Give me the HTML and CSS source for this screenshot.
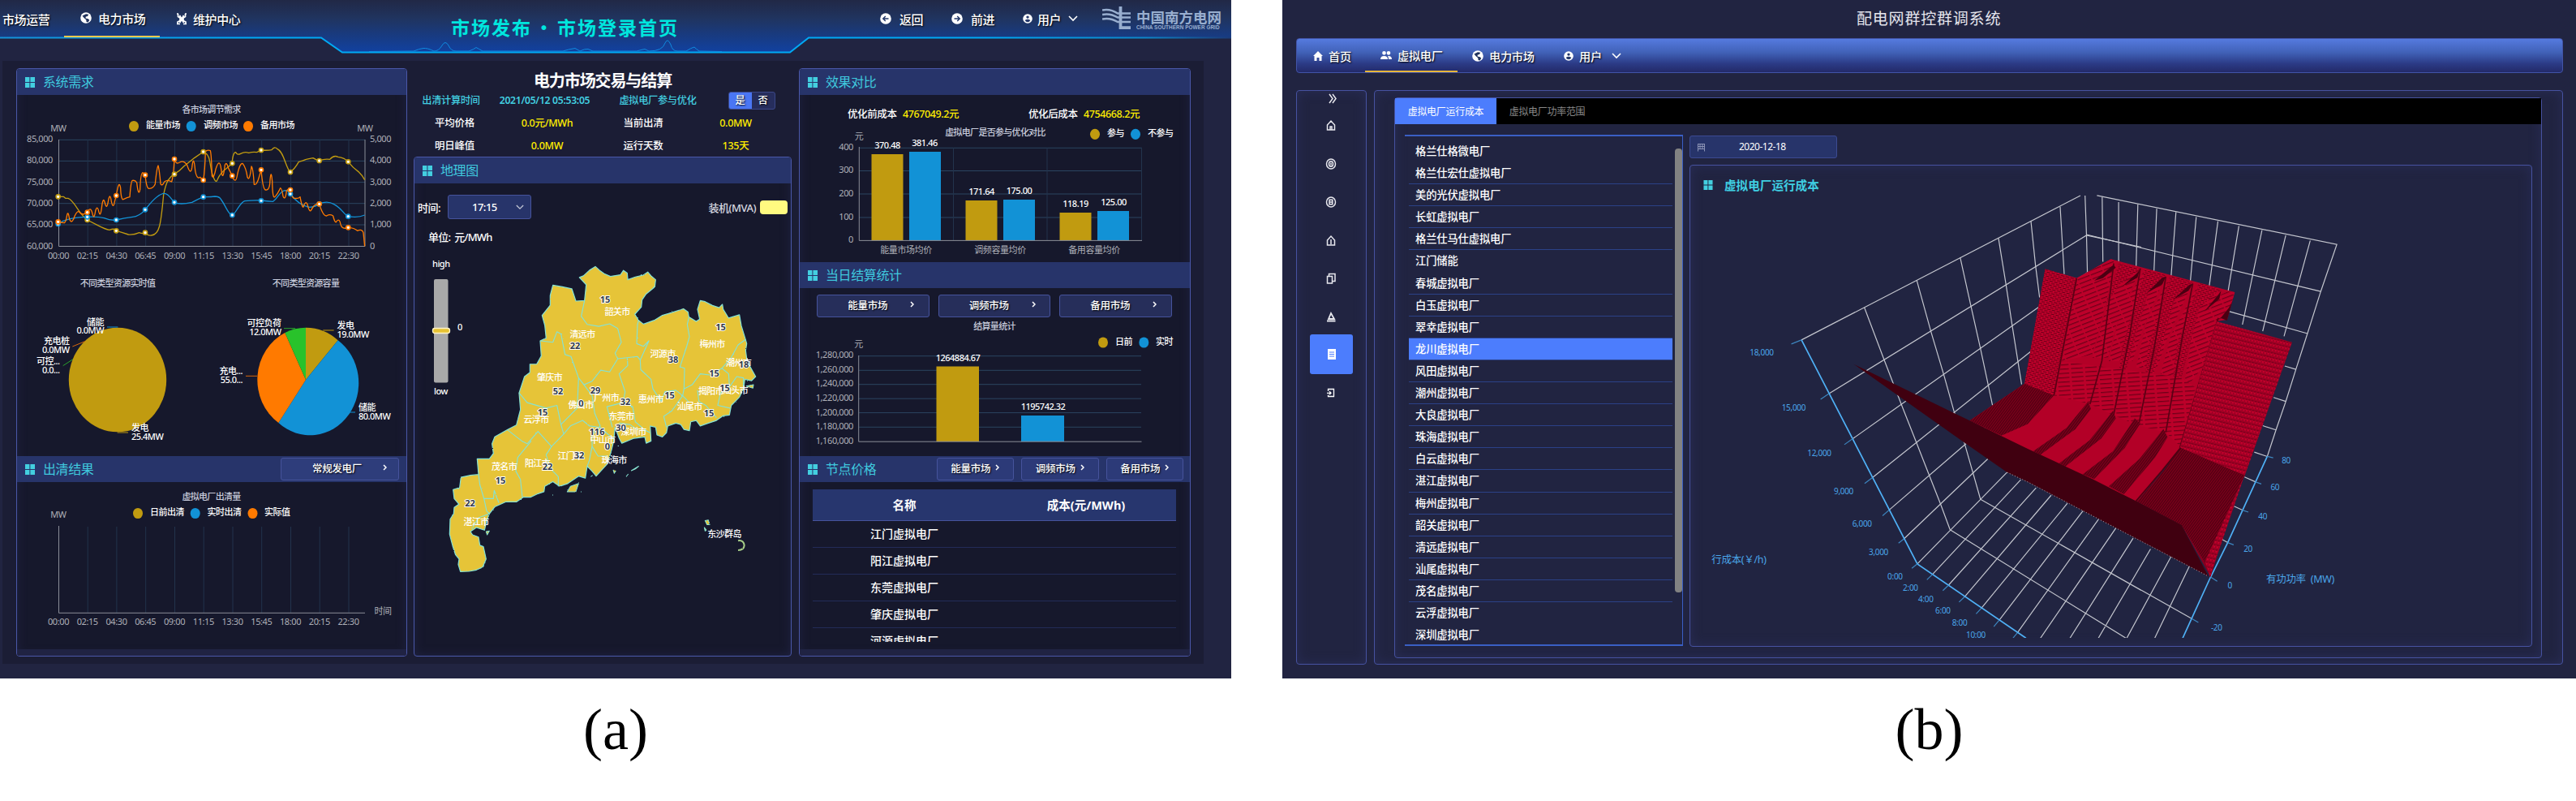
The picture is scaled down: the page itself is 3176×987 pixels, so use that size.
FILE: index.html
```html
<!DOCTYPE html>
<html lang="zh-CN">
<head>
<meta charset="utf-8">
<title>市场发布 · 配电网群控群调系统</title>
<link rel="stylesheet" href="styles.css">
</head>
<body>
<svg class="defs" width="0" height="0">
  <defs>
    <symbol id="grid" viewBox="0 0 12 13"><path fill="#43cfe0" d="M0 0h5.4v6H0zM6.4 0H12v6H6.4zM0 7h5.4v6H0zM6.4 7H12v6H6.4z"/></symbol>
    <symbol id="globe" viewBox="0 0 14 14"><circle cx="7" cy="7" r="6.8" fill="#fff"/><path fill="#20325c" d="M7 2.2l3.2.6L9 5 6.800 5.600 6.500 7.500l3.200.8 1.600 1.500-1.800 2.600-2-.4-.2-2.400-2.800-2.600L2.500 4.500z"/></symbol>
    <symbol id="user" viewBox="0 0 14 14"><circle cx="7" cy="7" r="6.800" fill="#fff"/><circle cx="7" cy="4.800" r="2" fill="#24386a"/><path fill="#24386a" d="M3 9.200q4-2.400 8 0-1.500 2.800-4 2.800T3 9.200z"/></symbol>
    <symbol id="chev" viewBox="0 0 12 8"><path d="M1 1l5 5 5-5" fill="none" stroke="#fff" stroke-width="1.600"/></symbol>
    <symbol id="chevr" viewBox="0 0 5 8"><path d="M1 1l3 3-3 3" fill="none" stroke="#fff" stroke-width="1.500"/></symbol>
  </defs>
</svg>

<figure class="fig fig-a">
<div class="screen market">
  <header class="top">
    <svg class="top-bg" width="1518" height="75" viewBox="0 0 1518 75">
      <defs>
        <linearGradient id="tg" x1="0" y1="0" x2="0" y2="64" gradientUnits="userSpaceOnUse"><stop offset="0" stop-color="#212846"/><stop offset=".35" stop-color="#20345f"/><stop offset="1" stop-color="#1141a0"/></linearGradient>
        <linearGradient id="tl" x1="0" y1="0" x2="1518" y2="0" gradientUnits="userSpaceOnUse"><stop offset="0" stop-color="#1592d8"/><stop offset=".2" stop-color="#00aaf5"/><stop offset=".8" stop-color="#00aaf5"/><stop offset=".93" stop-color="#0e86c8"/><stop offset="1" stop-color="#1b3a78"/></linearGradient>
      </defs>
      <path fill="url(#tg)" d="M0 0H1518V46H997L974 64.500H422L396 46H0z"/>
      <path fill="none" stroke="url(#tl)" stroke-width="2" d="M0 46.500H396L422 64.500H974L997 46.500H1518"/>
      <path fill="none" stroke="#0f8be0" d="M455 63.500L510 63Q517 60 522 59.500T535 63Q541 63 545 56T553 56Q556 63 562 63H578Q584 61 587 58.500Q590 60 595 63H694Q700 61 709 59.500L715 63Q721 60 725 60.500L731 63H785Q792 61 795 60.500L800 63Q817 63 820 53Q823 46 827 55Q829 63 835 63H846Q852 59 856 58Q858 60 862 63L890 63.500"/>
    </svg>
    <nav class="nav-l">
      <a>市场运营</a>
      <a class="on"><svg width="14" height="14"><use href="#globe"/></svg>电力市场</a>
      <a class="mt"><svg width="14" height="15" viewBox="0 0 14 15"><path d="M2.500 1v3.500L5 6v3.500L2 11v3M11.500 1v3.500L9 6v3.500l3 1.500v3M5 6h4M5 9.500h4M1 1h2M11 1h2M1 13.500h4M9 13.500h4M4.500 3l5 9M9.500 3l-5 9" fill="none" stroke="#fff" stroke-width="1.700"/></svg>维护中心</a>
    </nav>
    <h1>市场发布<i>·</i>市场登录首页</h1>
    <nav class="nav-r">
      <a><svg width="14" height="14" viewBox="0 0 14 14"><circle cx="7" cy="7" r="6.800" fill="#fff"/><path d="M10.500 7H4M6.800 4L3.800 7l3 3" fill="none" stroke="#24386a" stroke-width="1.500"/></svg>返回</a>
      <a><svg width="14" height="14" viewBox="0 0 14 14"><circle cx="7" cy="7" r="6.800" fill="#fff"/><path d="M3.500 7H10M7.200 4l3 3-3 3" fill="none" stroke="#24386a" stroke-width="1.500"/></svg>前进</a>
      <a class="usr"><svg width="12" height="14"><use href="#user" width="12" height="14"/></svg>用户<svg class="cv" width="12" height="8"><use href="#chev"/></svg></a>
    </nav>
    <div class="logo">
      <svg width="36" height="28" viewBox="0 0 36 28"><g fill="none" stroke="#98aecf" stroke-width="2.600"><path d="M0 4.500Q10 2.500 19 8.500H35M0 10Q10 8 19 13.500H35M0 15.500Q10 13.500 19 19H35"/><path d="M22.500 0V26.200H35" stroke-width="3.800"/></g></svg>
      <div><b>中国南方电网</b><small>CHINA SOUTHERN POWER GRID</small></div>
    </div>
  </header>

  <main class="board">
    <section class="panel col-l">
      <h2 class="hd"><svg width="12" height="13"><use href="#grid"/></svg>系统需求</h2>
      <svg class="chart" width="480" height="445" viewBox="21 117 480 445">
        <g transform="translate(0,4)">
          <g class="ttl"><text x="260.500" y="135">各市场调节需求</text><text x="145" y="348.500">不同类型资源实时值</text><text x="377" y="348.500">不同类型资源容量</text></g>
          <g class="lg"><text x="180" y="154">能量市场</text><text x="251" y="154">调频市场</text><text x="321" y="154">备用市场</text></g>
          <g class="ax m"><text x="72" y="158">MW</text><text x="450" y="158">MW</text></g>
          <g class="ax e"><text x="65" y="170.700">85,000</text><text x="65" y="197">80,000</text><text x="65" y="223.500">75,000</text><text x="65" y="250">70,000</text><text x="65" y="276">65,000</text><text x="65" y="302.500">60,000</text></g>
          <g class="ax"><text x="456" y="170.700">5,000</text><text x="456" y="197">4,000</text><text x="456" y="223.500">3,000</text><text x="456" y="250">2,000</text><text x="456" y="276">1,000</text><text x="456" y="302.500">0</text></g>
          <g class="ax m"><text x="72" y="315">00:00</text><text x="107.700" y="315">02:15</text><text x="143.500" y="315">04:30</text><text x="179.200" y="315">06:45</text><text x="215" y="315">09:00</text><text x="250.800" y="315">11:15</text><text x="286.500" y="315">13:30</text><text x="322.300" y="315">15:45</text><text x="358" y="315">18:00</text><text x="393.800" y="315">20:15</text><text x="429.500" y="315">22:30</text></g>
        </g>
        <ellipse cx="165" cy="155.500" rx="6" ry="6.600" fill="#c19b10"/><ellipse cx="235.700" cy="155.500" rx="6" ry="6.600" fill="#1292d6"/><ellipse cx="306" cy="155.500" rx="6" ry="6.600" fill="#ff7a00"/>
        <path class="gl" d="M72 172.300H450M72 198.400H450M72 224.600H450M72 250.700H450M72 277H450"/>
        <path class="gv" d="M108.200 172V303M143.900 172V303M179.700 172V303M215.500 172V303M251.200 172V303M287 172V303M322.700 172V303M358.500 172V303M394.200 172V303M430 172V303"/>
        <path class="al" d="M72.500 172V303.500H450V172"/>
        <g transform="translate(20,90) scale(.33333)" fill="none" stroke-width="4" stroke-linejoin="round">
          <path stroke="#c19b10" d="M155 457L175 457L182 463L192 463C215 470 230 520 263 543L300 562Q330 578 345 580Q365 572 370 583Q395 590 415 597Q435 599 455 590Q470 596 478 590Q485 602 500 600C530 598 535 560 545 450C555 400 565 385 585 373Q605 362 620 345Q645 325 660 313L692 291C720 300 715 340 725 372Q738 415 745 392Q755 370 775 355L798 335Q802 290 812 293Q818 305 830 298Q845 290 860 295Q875 291 890 293L906 285Q930 287 945 284Q955 270 965 280C990 290 995 345 1013 366Q1030 355 1045 328Q1060 325 1070 320Q1090 315 1098 314Q1110 322 1121 324Q1140 316 1160 319Q1175 302 1190 310Q1215 313 1228 328Q1245 350 1265 364Q1280 378 1289 395"/>
          <path stroke="#1292d6" d="M155 558C180 540 210 534 263 532Q300 530 325 536Q350 546 370 543Q400 536 430 532Q455 530 477 505C500 475 530 445 548 445C565 445 575 470 585 478Q605 488 650 478Q675 465 692 458Q720 458 735 456Q750 456 756 465C775 490 785 525 798 525C810 525 825 480 845 473Q875 470 906 471Q925 474 950 475C970 460 975 436 995 434Q1008 436 1014 447C1035 475 1060 492 1085 496Q1105 495 1121 484Q1150 470 1175 485C1205 500 1210 522 1228 530Q1265 536 1289 525"/>
          <path stroke="#ff7a00" d="M155 550L165 552L178 554Q184 550 187 530Q191 505 196 535Q202 560 212 540Q222 510 232 512Q238 522 250 522L263 515Q275 490 282 520Q288 545 293 510Q300 485 306 515Q312 535 317 490Q322 455 328 480Q335 510 341 470Q347 440 352 475Q359 505 364 475L370 453Q380 390 386 425Q388 475 398 466Q410 460 420 458Q424 400 430 397Q440 395 446 405Q452 460 458 430Q460 370 468 368L477 377Q482 430 492 427Q508 425 514 410Q520 350 525 342Q530 360 534 410Q540 420 548 402Q560 392 575 402Q582 380 585 318Q590 340 605 330Q620 322 632 340Q645 380 650 350Q656 295 662 360Q668 395 680 385L692 397Q698 360 700 290Q708 283 718 287Q722 300 724 380Q730 395 738 355Q752 310 758 355Q764 410 772 340Q778 325 784 350L799 380Q812 415 818 375Q828 330 838 335Q850 350 855 385Q863 405 870 345Q876 350 880 412Q890 415 898 385L906 358Q912 430 922 432Q935 435 938 410Q942 345 947 400Q948 465 956 458Q965 450 977 425Q982 425 987 455Q995 475 1000 435Q1008 425 1014 432Q1020 465 1030 463Q1045 465 1050 458Q1058 500 1062 495Q1070 470 1077 485Q1085 520 1092 505Q1105 480 1121 484Q1135 530 1148 528Q1160 520 1172 528Q1180 560 1185 548Q1196 535 1200 560Q1205 580 1228 571Q1250 572 1262 583Q1280 575 1284 590L1289 640"/>
          <g fill="#fff" stroke-width="5">
            <g stroke="#c19b10"><circle cx="155" cy="457" r="7.500"/><circle cx="263" cy="543" r="7.500"/><circle cx="370" cy="583" r="7.500"/><circle cx="477" cy="590" r="7.500"/><circle cx="585" cy="374" r="7.500"/><circle cx="692" cy="291" r="7.500"/><circle cx="799" cy="334" r="7.500"/><circle cx="906" cy="285" r="7.500"/><circle cx="1014" cy="366" r="7.500"/><circle cx="1121" cy="324" r="7.500"/><circle cx="1228" cy="328" r="7.500"/></g>
            <g stroke="#1292d6"><circle cx="155" cy="558" r="7.500"/><circle cx="263" cy="532" r="7.500"/><circle cx="370" cy="543" r="7.500"/><circle cx="477" cy="505" r="7.500"/><circle cx="585" cy="478" r="7.500"/><circle cx="692" cy="458" r="7.500"/><circle cx="799" cy="525" r="7.500"/><circle cx="906" cy="472" r="7.500"/><circle cx="1014" cy="447" r="7.500"/><circle cx="1121" cy="484" r="7.500"/><circle cx="1228" cy="530" r="7.500"/></g>
            <g stroke="#ff7a00"><circle cx="155" cy="550" r="7.500"/><circle cx="263" cy="515" r="7.500"/><circle cx="370" cy="453" r="7.500"/><circle cx="477" cy="377" r="7.500"/><circle cx="585" cy="318" r="7.500"/><circle cx="692" cy="396" r="7.500"/><circle cx="799" cy="380" r="7.500"/><circle cx="906" cy="358" r="7.500"/><circle cx="1014" cy="432" r="7.500"/><circle cx="1121" cy="484" r="7.500"/><circle cx="1228" cy="571" r="7.500"/></g>
          </g>
        </g>
        <ellipse cx="145" cy="468" rx="60.200" ry="64.300" fill="#c19b10"/>
        <g transform="translate(0,330) scale(.33333)">
          <path fill="#c19b10" d="M1131 414V221A180 193 0 0 1 1250 268Z"/>
          <path fill="#1292d6" d="M1131 414L1250 268A180 193 0 1 1 1030 573Z"/>
          <path fill="#ff7a00" d="M1131 414L1030 573A180 193 0 0 1 1054 240Z"/>
          <path fill="#29c22b" d="M1131 414L1054 240A180 193 0 0 1 1131 221Z"/>
          <g fill="none" stroke-width="3"><path stroke="#1292d6" d="M396 219H436M1275 534H1314"/><path stroke="#d9670a" d="M268 291L314 272M909 400H951"/><path stroke="#29a22b" d="M233 362L270 338M1050 224H1092"/><path stroke="#c19b10" d="M434 609H474M1195 231H1235"/></g>
        </g>
        <g transform="translate(0,4)">
          <g class="lg e"><text x="128" y="396.500">储能</text><text x="128" y="407">0.0MW</text><text x="85.500" y="420">充电桩</text><text x="85.500" y="431">0.0MW</text><text x="73.500" y="445">可控...</text><text x="73.500" y="456">0.0...</text><text x="346.500" y="398">可控负荷</text><text x="346.500" y="409">12.0MW</text><text x="299" y="456.500">充电...</text><text x="299" y="467.500">55.0...</text></g>
          <g class="lg"><text x="162" y="527">发电</text><text x="162" y="538">25.4MW</text><text x="415.500" y="401">发电</text><text x="415.500" y="412">19.0MW</text><text x="442" y="501.500">储能</text><text x="442" y="512.500">80.0MW</text></g>
        </g>
      </svg>
      <h2 class="hd"><svg width="12" height="13"><use href="#grid"/></svg>出清结果<button class="btn b-plant">常规发电厂<svg width="5" height="8"><use href="#chevr"/></svg></button></h2>
      <svg class="chart" width="480" height="206" viewBox="21 594 480 206">
        <g transform="translate(0,4)">
          <g class="ttl"><text x="260.500" y="612">虚拟电厂出清量</text></g>
          <g class="lg"><text x="185" y="631">日前出清</text><text x="255.500" y="631">实时出清</text><text x="326" y="631">实际值</text></g>
          <g class="ax m"><text x="72" y="634">MW</text><text x="472" y="753">时间</text><text x="72" y="766">00:00</text><text x="107.700" y="766">02:15</text><text x="143.500" y="766">04:30</text><text x="179.200" y="766">06:45</text><text x="215" y="766">09:00</text><text x="250.800" y="766">11:15</text><text x="286.500" y="766">13:30</text><text x="322.300" y="766">15:45</text><text x="358" y="766">18:00</text><text x="393.800" y="766">20:15</text><text x="429.500" y="766">22:30</text></g>
        </g>
        <ellipse cx="170" cy="632.500" rx="6" ry="6.600" fill="#c19b10"/><ellipse cx="240.700" cy="632.500" rx="6" ry="6.600" fill="#1292d6"/><ellipse cx="311.500" cy="632.500" rx="6" ry="6.600" fill="#ff7a00"/>
        <path class="gv" d="M108.200 649V755M143.900 649V755M179.700 649V755M215.500 649V755M251.200 649V755M287 649V755M322.700 649V755M358.500 649V755M394.200 649V755M430 649V755"/>
        <path class="al" d="M72.500 648V755.300H450"/>
      </svg>
      <div class="foot"></div>
    </section>

    <section class="col-m">
      <h3>电力市场交易与结算</h3>
      <div class="kv first"><span>出清计算时间</span><span class="dt">2021/05/12 05:53:05</span><span>虚拟电厂参与优化</span><span class="tog"><b>是</b><em>否</em></span></div>
      <div class="kv"><span>平均价格</span><span class="y">0.0元/MWh</span><span>当前出清</span><span class="y">0.0MW</span></div>
      <div class="kv"><span>明日峰值</span><span class="y">0.0MW</span><span>运行天数</span><span class="y">135天</span></div>
      <div class="panel geo">
        <h2 class="hd"><svg width="12" height="13"><use href="#grid"/></svg>地理图</h2>
        <div class="geo-bar"><label>时间:</label><div class="sel">17:15<svg width="10" height="7"><use href="#chev"/></svg></div><span>装机(MVA)</span><i></i></div>
        <svg class="chart" width="464" height="530" viewBox="511 278 464 530">
          <defs><filter id="coast" x="-5%" y="-5%" width="110%" height="110%"><feTurbulence type="fractalNoise" baseFrequency=".16" numOctaves="2" seed="4"/><feDisplacementMap in="SourceGraphic" scale="5" xChannelSelector="R" yChannelSelector="G"/></filter></defs>
          <rect x="535" y="344" width="17.500" height="127.500" rx="2" fill="#a9a9a9"/>
          <rect x="533.500" y="404.500" width="21" height="6" rx="2.500" fill="#e6c233" stroke="#fff3c8" stroke-width="1.300"/>
          <g transform="translate(500,300) scale(.33333,.33807)"><g filter="url(#coast)" stroke="#85e2d4" stroke-width="3.600" stroke-linejoin="round">
            <path fill="#e6c438" d="M643 124L658 118L680 98L702 84L718 98L735 110L758 120L795 114L806 98L820 108L822 132L850 122L878 116L896 104L910 120L925 132L922 158L890 184L875 205L872 232L848 258L862 280L880 294L920 280L950 262L985 252L1028 238L1045 250L1048 268L1075 284L1088 276L1080 240L1090 208L1108 212L1135 226L1160 234L1172 222L1175 240L1195 272L1235 260L1242 300L1256 345L1262 365L1258 390L1262 420L1275 450L1295 485L1280 500L1255 495L1250 530L1235 560L1205 590L1198 625L1175 628L1150 645L1120 655L1090 665L1075 645L1055 650L1050 682L1030 678L1018 660L1000 655L970 665L965 690L950 705L930 698L925 670L905 665L908 720L890 728L885 705L845 710L800 728L790 710L775 670L770 720L760 760L745 805L705 848L690 830L672 812L665 855L640 848L600 875L570 885L545 868L515 885L512 905L490 912L462 925L435 925L410 942L370 942L330 960L310 985L300 1010L292 1045L262 1035L240 1050L248 1062L270 1070L275 1100L288 1105L298 1150L285 1180L262 1190L235 1195L203 1196L195 1170L198 1150L185 1135L175 1105L163 1060L165 1005L178 985L180 962L197 950L180 930L176 897L200 890L205 852L240 845L270 842L265 785L310 785L325 765L320 730L330 705L378 678L410 662L425 605L420 545L440 485L460 470L460 440L485 440L502 410L498 355L520 345L515 298L505 262L535 225L535 190L545 152L580 158L615 165L630 210L662 208L668 150Z"/>
            <g fill="none" stroke-width="3.400"><path d="M662 208L650 265L672 295L715 302L755 293L785 310L798 360L775 400L785 420L755 468L722 462L690 502L660 515L640 490L612 412L590 405L575 330L560 322L545 360L500 355"/><path d="M785 420L858 412L868 425L900 355L880 375L855 365L858 295L862 280"/><path d="M820 418L822 445L790 475L812 540L805 580L840 595L850 650L885 680L905 690"/><path d="M868 425L870 460L908 495L915 530L945 575L960 540L1000 535L1025 555L985 610L955 630L965 670"/><path d="M1048 270L1042 295L1050 340L1040 375L1015 450L1032 455L1030 530L1060 515L1090 475L1130 480L1170 455L1205 415L1230 370L1258 350"/><path d="M1030 530L1025 555L1050 580M1080 535L1085 575L1110 590L1150 635M1170 455L1195 475L1198 520L1165 545L1155 590L1200 600M1200 520L1225 485L1250 490L1250 520"/><path d="M660 515L690 555L700 620L720 665L690 700L690 740L680 790L672 812M640 490L635 600L575 660L560 590L520 600L450 580L420 545"/><path d="M575 660L585 695L610 665L655 645L680 665L720 670L765 710M805 580L745 595L765 670M585 695L540 740L490 685L450 730L430 720L378 680"/><path d="M465 720L415 780L408 830L425 860L432 925M540 740L520 770L535 820L565 850L565 885M690 740L712 775L745 775M270 842L275 880L290 930L325 930L328 900L345 945M290 930L300 975L310 985L270 1000L245 1040M790 655L830 660L860 680"/></g>
            <path fill="#e6c438" stroke-width="3" d="M598 905L610 885L640 875L630 905ZM1260 520L1287 515L1285 527ZM298 1050L310 1048L302 1062ZM1108 1010L1120 1008L1125 1025L1115 1025ZM1105 1035L1113 1045L1108 1048ZM835 828L862 812L850 822ZM816 850L824 840M768 825L772 838L778 828M685 850L692 845M785 738H789M543 917h3M648 905h3"/>
            <path fill="none" stroke="#a8cf88" stroke-width="6" d="M1230 1083Q1250 1080 1253 1100Q1252 1118 1230 1118"/></g></g>
          <g transform="translate(0,4)">
            <g class="hl"><text x="528" y="293">单位:&#160; 元/MWh</text></g>
            <g class="lg"><text x="533" y="325">high</text><text x="535" y="482">low</text><text x="564" y="402.500">0</text></g>
            <g class="city"><text x="761" y="384">韶关市</text><text x="718" y="411.500">清远市</text><text x="817" y="436">河源市</text><text x="878" y="423.500">梅州市</text><text x="910.500" y="446.500">潮州市</text><text x="677.500" y="464.500">肇庆市</text><text x="747.500" y="490">广州市</text><text x="802.500" y="492">惠州市</text><text x="876.500" y="481.500">揭阳市</text><text x="906.500" y="481">汕头市</text><text x="716" y="498.500">佛山市</text><text x="850" y="501">汕尾市</text><text x="661" y="517">云浮市</text><text x="766" y="513">东莞市</text><text x="781" y="532">深圳市</text><text x="743" y="542">中山市</text><text x="703" y="562">江门市</text><text x="757" y="567">珠海市</text><text x="662.500" y="570.500">阳江市</text><text x="621.500" y="574.500">茂名市</text><text x="587" y="643">湛江市</text><text x="893" y="658">东沙群岛</text></g>
            <g class="num"><text x="746" y="369">15</text><text x="709" y="426">22</text><text x="830" y="442.500">38</text><text x="888.500" y="403">15</text><text x="917" y="449">18</text><text x="880.500" y="460">15</text><text x="893.500" y="478">15</text><text x="688" y="482">52</text><text x="734" y="481">29</text><text x="825.500" y="487">15</text><text x="771" y="494.500">32</text><text x="716.500" y="496.500">0</text><text x="874" y="509">15</text><text x="669" y="507.500">15</text><text x="765.500" y="526.500">30</text><text x="736" y="531.500">116</text><text x="749" y="549.500">0</text><text x="714" y="560.500">32</text><text x="675" y="575">22</text><text x="617" y="591.500">15</text><text x="579.500" y="620">22</text></g>
          </g>
        </svg>
      </div>
    </section>

    <section class="panel col-r">
      <h2 class="hd"><svg width="12" height="13"><use href="#grid"/></svg>效果对比</h2>
      <div class="costs"><span>优化前成本</span><b>4767049.2元</b><span>优化后成本</span><b>4754668.2元</b></div>
      <svg class="chart" width="481" height="170" viewBox="986 153 481 170">
        <path class="gl" d="M1059 182.300H1408M1059 210.500H1408M1059 239H1408M1059 268H1408"/><path class="gv" d="M1175.500 182V296M1291 182V296M1407.500 182V296"/>
        <path fill="#c19b10" d="M1074.500 190h39v106h-39zM1190.500 247h39v49h-39zM1306.500 262h39v34h-39z"/><path fill="#1292d6" d="M1121 187h39v109h-39zM1237 246h39v50h-39zM1353 260h39v36h-39z"/>
        <path class="al" d="M1059.300 181V296.400H1408"/>
        <ellipse cx="1350" cy="165.300" rx="6" ry="6.600" fill="#c19b10"/><ellipse cx="1400" cy="165.300" rx="6" ry="6.600" fill="#1292d6"/>
        <g transform="translate(0,4)">
          <g class="ttl"><text x="1227" y="163">虚拟电厂是否参与优化对比</text></g>
          <g class="lg"><text x="1365" y="164">参与</text><text x="1415" y="164">不参与</text></g>
          <g class="ax m"><text x="1059" y="167.500">元</text><text x="1117" y="307.500">能量市场均价</text><text x="1233" y="307.500">调频容量均价</text><text x="1349" y="307.500">备用容量均价</text></g>
          <g class="ax e"><text x="1052" y="180.500">400</text><text x="1052" y="209">300</text><text x="1052" y="238">200</text><text x="1052" y="266.500">100</text><text x="1052" y="295">0</text></g>
          <g class="lg m"><text x="1094" y="178.500">370.48</text><text x="1140" y="176">381.46</text><text x="1210" y="236">171.64</text><text x="1256.500" y="234.500">175.00</text><text x="1326" y="251">118.19</text><text x="1373" y="249">125.00</text></g>
        </g>
      </svg>
      <h2 class="hd"><svg width="12" height="13"><use href="#grid"/></svg>当日结算统计</h2>
      <div class="btns"><button class="btn">能量市场<svg width="5" height="8"><use href="#chevr"/></svg></button><button class="btn">调频市场<svg width="5" height="8"><use href="#chevr"/></svg></button><button class="btn">备用市场<svg width="5" height="8"><use href="#chevr"/></svg></button></div>
      <svg class="chart" width="481" height="169" viewBox="986 393 481 169">
        <path class="gl" d="M1059 438.700H1407M1059 456.300H1407M1059 473.700H1407M1059 491.200H1407M1059 508.600H1407M1059 526.300H1407"/>
        <path fill="#c19b10" d="M1154.500 451.500h52.500v92.500h-52.500z"/><path fill="#1292d6" d="M1259 512h53v32h-53z"/>
        <path class="al" d="M1058.700 438V544.200H1407.500"/>
        <ellipse cx="1360" cy="422" rx="6" ry="6.600" fill="#c19b10"/><ellipse cx="1410.300" cy="422" rx="6" ry="6.600" fill="#1292d6"/>
        <g transform="translate(0,4)">
          <g class="ttl"><text x="1226" y="402">结算量统计</text></g>
          <g class="lg"><text x="1375" y="421">日前</text><text x="1425" y="421">实时</text></g>
          <g class="ax m"><text x="1058.500" y="424">元</text></g>
          <g class="ax e"><text x="1052" y="437.300">1,280,000</text><text x="1052" y="454.800">1,260,000</text><text x="1052" y="472.300">1,240,000</text><text x="1052" y="490.300">1,220,000</text><text x="1052" y="507.600">1,200,000</text><text x="1052" y="525">1,180,000</text><text x="1052" y="542.500">1,160,000</text></g>
          <g class="lg m"><text x="1181" y="441">1264884.67</text><text x="1286" y="501">1195742.32</text></g>
        </g>
      </svg>
      <h2 class="hd hd-b"><svg width="12" height="13"><use href="#grid"/></svg>节点价格<span class="grp"><button class="btn">能量市场<svg width="5" height="8"><use href="#chevr"/></svg></button><button class="btn">调频市场<svg width="5" height="8"><use href="#chevr"/></svg></button><button class="btn">备用市场<svg width="5" height="8"><use href="#chevr"/></svg></button></span></h2>
      <div class="tbl">
        <div class="tr th"><span>名称</span><span>成本(元/MWh)</span></div>
        <div class="tr"><span>江门虚拟电厂</span></div>
        <div class="tr"><span>阳江虚拟电厂</span></div>
        <div class="tr"><span>东莞虚拟电厂</span></div>
        <div class="tr"><span>肇庆虚拟电厂</span></div>
        <div class="tr"><span>河源虚拟电厂</span></div>
      </div>
      <div class="foot"></div>
    </section>
  </main>
</div>
<figcaption>(a)</figcaption>
</figure>

<figure class="fig fig-b">
<div class="screen grid-sys">
  <h1>配电网群控群调系统</h1>
  <nav class="bar">
    <a class="n1"><svg width="12" height="12" viewBox="0 0 12 12"><path fill="#fff" d="M6 0l6 6h-1.500v6H7.500V8h-3v4H1.500V6H0z"/></svg>首页</a>
    <a class="on"><svg width="14" height="12" viewBox="0 0 14 12"><path fill="#fff" d="M4.500 1a2.300 2.300 0 1 1 0 4.700 2.300 2.300 0 0 1 0-4.700zM10 1a2.300 2.300 0 1 1 0 4.700A2.300 2.300 0 0 1 10 1zM0 11q0-4 4.500-4T9 11zM10 11q0-2.500-1-4 5-.4 5 4z"/></svg>虚拟电厂</a>
    <a class="n3"><svg width="14" height="14"><use href="#globe"/></svg>电力市场</a>
    <a class="n4"><svg width="12" height="14"><use href="#user" width="12" height="14"/></svg>用户<svg class="cv" width="12" height="8"><use href="#chev"/></svg></a>
  </nav>
  <div class="work">
    <aside class="frame side">
      <svg width="85" height="296" viewBox="1599 112 85 296"><g fill="none" stroke="#e8e8ee" stroke-width="1.500">
        <path d="M1639 116l4 5.500-4 5.500M1643 116l4 5.500-4 5.500"/>
        <path d="M1636.500 154l4.500-5 4.500 5v6h-9zM1640 160v-4h2v4"/>
        <ellipse cx="1641" cy="202" rx="5.500" ry="6"/><ellipse cx="1641" cy="202" rx="2.500" ry="3.200"/><path d="M1641 200.500v3"/>
        <ellipse cx="1641" cy="249" rx="5.500" ry="6"/><path d="M1639 246.300h3.800v5.400h-3.800zM1639 249h3.800"/>
        <path d="M1636.500 296l4.500-5 4.500 5v6h-9zM1641 295v6"/>
        <path d="M1636.500 340.500h6v8.500h-6zM1638.500 340.500v-3h7.500v9h-3.500"/>
        <path d="M1636 395.500h10.500M1638 393l3-7 4 7z" stroke-width="1.800"/></g></svg>
      <div class="act"><svg width="12" height="13" viewBox="0 0 12 13"><path fill="#fff" d="M1 0h10v13H1z"/><path stroke="#4c7dfd" d="M3 4h6M3 6.500h6M3 9h6"/></svg></div>
      <svg class="last" width="12" height="12" viewBox="0 0 12 12"><path d="M2.500 4V1.500h7v9h-7V8.500M1 6.300h4.500M4 4.300l2 2-2 2" fill="none" stroke="#fff" stroke-width="1.300"/></svg>
    </aside>
    <div class="frame outer"><div class="frame inner">
      <div class="tabs"><span class="on">虚拟电厂运行成本</span><span>虚拟电厂功率范围</span></div>
      <div class="body">
        <div class="list">
          <ul>
            <li>格兰仕格微电厂</li><li>格兰仕宏仕虚拟电厂</li><li>美的光伏虚拟电厂</li><li>长虹虚拟电厂</li><li>格兰仕马仕虚拟电厂</li><li>江门储能</li><li>春城虚拟电厂</li><li>白玉虚拟电厂</li><li>翠幸虚拟电厂</li><li class="on">龙川虚拟电厂</li><li>风田虚拟电厂</li><li>潮州虚拟电厂</li><li>大良虚拟电厂</li><li>珠海虚拟电厂</li><li>白云虚拟电厂</li><li>湛江虚拟电厂</li><li>梅州虚拟电厂</li><li>韶关虚拟电厂</li><li>清远虚拟电厂</li><li>汕尾虚拟电厂</li><li>茂名虚拟电厂</li><li>云浮虚拟电厂</li><li>深圳虚拟电厂</li>
          </ul>
          <div class="sb"></div>
        </div>
        <div class="right">
          <div class="date"><svg width="11" height="11" viewBox="0 0 11 11"><path d="M1 1.500h9M1 4.500h9M1.500 1v9.500M9.500 1v9.500M4 1v7M7 1v7M1 7.500h9" fill="none" stroke="#8b93b5"/></svg><span>2020-12-18</span></div>
          <div class="frame plot">
            <h2><svg width="12" height="12"><use href="#grid" width="12" height="12"/></svg>虚拟电厂运行成本</h2>
            <svg class="chart" width="1037" height="546" viewBox="2084 240 1037 546">
              <defs>
                <pattern id="mesh" width="14" height="12" patternUnits="userSpaceOnUse" patternTransform="rotate(14)"><rect width="14" height="12" fill="#c2002b"/><path d="M0 2.500H10M7 8.500H14M0 8.500H3" stroke="#5c0015" stroke-width="2.600"/></pattern>
                <pattern id="mesh2" width="9" height="14" patternUnits="userSpaceOnUse" patternTransform="rotate(14)"><rect width="9" height="14" fill="#c8002c"/><path d="M2 0V9M6.500 5V14M0 11H9" stroke="#660018" stroke-width="2"/></pattern>
                <pattern id="hat" width="40" height="13" patternUnits="userSpaceOnUse" patternTransform="rotate(-22)"><rect width="40" height="13" fill="#bd002a"/><path d="M0 6H36" stroke="#5c0015" stroke-width="2.500"/></pattern>
                <pattern id="hat2" width="40" height="13" patternUnits="userSpaceOnUse" patternTransform="rotate(-4)"><rect width="40" height="13" fill="#bb0029"/><path d="M0 6H34" stroke="#5c0015" stroke-width="2.500"/></pattern>
                <pattern id="dk" width="6" height="6" patternUnits="userSpaceOnUse" patternTransform="rotate(35)"><rect width="6" height="6" fill="#84001c"/><path d="M2 0V6" stroke="#430010" stroke-width="2.800"/></pattern>
              </defs>
              <g transform="translate(2080,200) scale(.35714,.3827)" fill="none" class="wire">
                <path d="M395 572L1358 107M490 745L1379 235L1568 273M572 890L1382 355M640 1015L1185 610M697 1120L958 910L1150 760M748 1213L1038 955M795 1293L1105 998"/>
                <path d="M612 467L680 635L740 780L792 903L837 1010L875 1100L908 1183M793 380L842 545L886 683L922 803L958 905L987 1000L1013 1085M943 307L980 463L1013 600L1040 718L1055 785M1075 244L1101 393L1122 523L1142 640L1155 715M1187 188L1203 332L1217 435M1288 143L1302 360M1374 107L1379 235L1382 355"/>
                <path d="M847 1327L1152 1022M902 1362L1205 1048M957 1400L1257 1072M1015 1437L1313 1098M1077 1475L1367 1122M1140 1515L1420 1150M1220 1532L1480 1178M1322 1532L1540 1210M1420 1532L1600 1245M908 1183L1515 1532M1013 1085L1568 1378"/>
                <path class="axis" d="M395 572L795 1293L1170 1532"/>
                <path class="tick" d="M395 572L360 585M490 745L461 763M572 890L543 909M640 1015L613 1034M697 1120L675 1138M748 1213L730 1226M795 1293L776 1307M847 1327L828 1344M902 1362L883 1379M957 1400L939 1416M1015 1437L998 1454M1077 1475L1059 1495M1140 1515L1125 1532"/>
              </g>
              <g transform="translate(2500,200) scale(.43113,.40816)">
                <g fill="none" class="wire">
                  <path d="M198 100L884 248L838 390L800 517L767 625L738 722L710 808L685 888M168 218L838 390M575 450L800 517M735 615L767 625M703 710L738 722M672 795L710 808M648 875L685 888M620 950L652 965M590 1038L614 1050M555 1138L572 1148M325 1292L470 1378M283 1437L410 1190M363 1437L462 1220"/>
                  <path d="M213 105L215 300M260 120V305M315 127L310 315M369 140L361 330M424 150L410 345M482 165L465 360M544 178L519 375M604 192L573 390M670 205L614 490M738 220L672 510M808 236L733 525"/>
                  <path class="axis" d="M685 888L572 1148L523 1252L443 1437"/>
                  <path class="tick" d="M685 888L702 892M652 965L668 971M614 1050L631 1056M572 1148L589 1155M523 1252L542 1265M470 1378L488 1389"/>
                </g>
                <path fill="#b30027" d="M50 322L140 350L238 292L592 392L570 475L540 480L437 862L313 1025L0 868L-166 780L-9 668Z"/>
                <path fill="url(#mesh)" d="M50 322L140 350L75 704L-9 668Z"/>
                <path fill="url(#hat)" d="M140 350L238 292L250 300L220 440L185 580L98 600Z"/>
                <path fill="url(#hat)" d="M260 304L322 320L250 500L230 590L185 590ZM336 322L395 340L330 500L300 600L232 600L265 450ZM408 343L472 362L400 530L370 620L310 620L340 480ZM490 365L552 383L460 560L440 650L380 640L410 520Z"/>
                <path fill="url(#mesh)" d="M262 303L322 320L262 370L222 430ZM336 323L395 340L345 390L300 560L245 760L270 560ZM408 343L472 362L418 420L370 600L320 790L345 560ZM490 365L552 383L490 440L400 815L425 560Z"/>
                <path fill="url(#hat)" d="M552 400L572 390L592 392L570 475L540 475L500 620L445 690L470 520Z"/>
                <path fill="url(#hat2)" d="M98 600L440 650L480 680L437 858L395 815L320 795L248 765L175 728L75 704Z"/>
                <path fill="none" stroke="#5c0015" stroke-width="4" d="M140 350L75 704M246 305L212 600L178 730M322 320L292 520L246 762M395 345L362 560L318 790M472 366L440 540L395 815M545 470L435 862"/>
                <path fill="#4a0012" d="M190 358L245 310L252 318L215 350ZM270 375L312 335L320 325L314 348ZM340 395L385 348L395 345L385 368ZM415 415L462 370L472 366L460 388ZM505 450L545 400L553 388L548 412ZM552 470L575 440L585 420L570 478Z"/>
                <path fill="url(#mesh2)" d="M540 480L756 543L620 948L435 862Z"/>
                <path fill="url(#dk)" d="M-9 668L75 704L0 790L-75 825L-166 780Z"/>
                <path fill="url(#dk)" d="M16 872L111 802L173 722L181 745L136 806L36 883ZM90 909L177 839L244 750L252 773L210 834L107 919ZM157 942L244 872L306 773L322 788L277 863L190 956ZM232 978L320 895L388 805L400 830L365 890L275 1002Z"/>
                <path fill="#840020" d="M313 1025L390 930L437 862L620 945L590 1015L523 1252L440 1095Z"/>
                <path fill="url(#dk)" d="M313 1025L390 930L437 862L620 945L590 1015L508 1210L440 1095Z"/>
                <path fill="url(#mesh2)" d="M590 1015L620 945L521 1252L507 1205Z"/>
                <path fill="#400010" d="M-498 609L-166 780L0 865L185 956L313 1025L440 1095L517 1250L0 965L-59 936L-179 848Z"/>
                <path fill="none" stroke="#4e0012" stroke-width="4" d="M308 1025L385 930L437 862"/>
                <path fill="none" stroke="#b9a4ad" stroke-width="2" stroke-dasharray="3 5" d="M-59 936L0 965L517 1250"/>
              </g>
              <g class="lb" transform="translate(0,3.500)"><text x="2172" y="434">18,000</text><text x="2211.400" y="502">15,000</text><text x="2243" y="558">12,000</text><text x="2273" y="605">9,000</text><text x="2295.700" y="645.500">6,000</text><text x="2316" y="680">3,000</text><text x="2336.400" y="710.500">0:00</text><text x="2355.400" y="724.300">2:00</text><text x="2374.300" y="738">4:00</text><text x="2395.400" y="752.600">6:00</text><text x="2416" y="767.500">8:00</text><text x="2436" y="782">10:00</text>
                <text x="2818.600" y="567.800">80</text><text x="2804.800" y="600">60</text><text x="2789.700" y="636">40</text><text x="2771.600" y="676">20</text><text x="2749.200" y="721.600">0</text><text x="2732.800" y="773.500">-20</text></g>
              <g class="lb big"><text x="2144" y="694">行成本(￥/h)</text><text x="2836" y="718">有功功率&#160; (MW)</text></g>
            </svg>
          </div>
        </div>
      </div>
    </div></div>
  </div>
</div>
<figcaption>(b)</figcaption>
</figure>
</body>
</html>
```
FILE: styles.css
```css
* { box-sizing: border-box; }
body {
  margin: 0;
  width: 3176px;
  height: 987px;
  overflow: hidden;
  background: #fff;
  display: flex;
  font-family: "Noto Sans", "Noto Sans CJK SC", sans-serif;
  color: #fff;
}
.defs { position: absolute; }
svg { display: block; flex: none; }
h1, h2, h3, ul, figure { margin: 0; padding: 0; font-weight: 400; }
.fig { display: flex; flex-direction: column; }
.fig-a { width: 1518px; }
.fig-b { width: 1595px; margin-left: 63px; }
.screen { height: 836px; background: #212441; overflow: hidden; }
figcaption {
  color: #000;
  font: 72px/80px "Liberation Serif", serif;
  text-align: center;
  padding-top: 23px;
}

/* market board */
.top { position: relative; height: 75px; display: flex; }
.top-bg { position: absolute; left: 0; top: 0; }
.top > :not(.top-bg) { position: relative; }
.nav-l { width: 556px; display: flex; }
.nav-l a, .nav-r a {
  height: 46px;
  display: flex;
  align-items: center;
  font-size: 15px;
  font-weight: 500;
  letter-spacing: -0.4px;
  text-shadow: 1px 1px 2px #000;
}
.nav-l a { padding-left: 3px; width: 79px; }
.nav-l a.on { width: 118px; padding-left: 20px; gap: 8px; border-bottom: 2px solid #f3c94e; }
.nav-l a.mt { width: 120px; padding-left: 20px; gap: 7px; }
.top h1 {
  width: 529px;
  padding-top: 17px;
  font: 700 23px/32px "Noto Sans CJK SC", sans-serif;
  letter-spacing: 2px;
  color: #00e6de;
  display: flex;
  height: 60px;
  white-space: nowrap;
}
.top h1 i { width: 31px; text-align: center; font-style: normal; }
.nav-r { display: flex; width: 274px; }
.nav-r a { width: 88px; gap: 10px; }
.nav-r .usr { width: 90px; gap: 6px; }
.nav-r .cv { margin-left: 3px; }
.logo { display: flex; gap: 6px; padding-top: 8px; color: #98aecf; height: 40px; }
.logo b { display: block; font: 700 17.500px/18px "Noto Sans CJK SC", sans-serif; margin-top: 4px; white-space: nowrap; }
.logo small { display: block; font: 700 6.400px/8px "Liberation Sans", sans-serif; white-space: nowrap; letter-spacing: 0.05px; }

.board {
  margin-left: 3px;
  width: 1481px;
  height: 743px;
  padding: 9px 16px 9px 17px;
  background: #1b1d35;
  display: flex;
}
.panel { border: 1px solid #4a57a8; border-radius: 4px; background: #16182c; overflow: hidden; box-shadow: inset 0 0 12px #202344; }
.col-l { width: 482px; height: 725px; }
.col-m { width: 466px; height: 725px; margin: 0 9px 0 8px; }
.col-r { width: 483px; height: 725px; }
.hd {
  height: 32px;
  background: #27346a;
  display: flex;
  align-items: center;
  gap: 10px;
  padding-left: 10px;
  color: #3fc9de;
  font-size: 16px;
  line-height: 32px;
  letter-spacing: -0.4px;
}
.foot { height: 8px; background: #202343; }
.chart text { font-size: 11px; }
.ttl text { fill: #c8ccdc; text-anchor: middle; letter-spacing: -0.7px; font-weight: 500; }
.lg text { fill: #fff; letter-spacing: -0.5px; font-weight: 500; }
.hl text { fill: #fff; font-size: 13px; letter-spacing: -0.8px; font-weight: 500; }
.ax text { fill: #adafb7; letter-spacing: -0.4px; }
.m text { text-anchor: middle; }
.e text { text-anchor: end; }
.gl { stroke: #2a4560; fill: none; }
.gv { stroke: #22334c; fill: none; }
.al { stroke: #8b8e98; fill: none; }
.city text { fill: #fff; text-anchor: middle; letter-spacing: -0.6px; font-weight: 500; }
.num text { fill: #333a48; text-anchor: middle; font-weight: 700; paint-order: stroke; stroke: #fff; stroke-width: 1.800px; }
.btn {
  height: 28px;
  border: 1px solid #46539c;
  border-radius: 3px;
  background: #262e5a;
  color: #fff;
  font-family: inherit;
  font-size: 12.500px;
  font-weight: 500;
  line-height: 14px;
  letter-spacing: -0.3px;
  padding: 0;
  display: flex;
  align-items: center;
  justify-content: center;
  text-shadow: 1px 1px 2px #000;
}
.btn svg { margin-top: -5px; }
.b-plant { width: 146px; margin-left: auto; margin-right: 9px; background: #2e3d7b; padding-left: 24px; gap: 26px; }
.col-m h3 { text-align: center; font: 700 20px/30px "Noto Sans CJK SC", sans-serif; letter-spacing: -1.100px; height: 26px; }
.kv { display: grid; grid-template-columns: 101px 127px 110px 118px; text-align: center; font-size: 12.500px; font-weight: 500; line-height: 28px; height: 28px; letter-spacing: -0.3px; }
.kv.first { grid-template-columns: 92px 139px 140px 91px; color: #42cfe0; font-size: 12.200px; }
.kv .dt { font-weight: 600; }
.y { color: #ffee00; }
.tog { display: flex; width: 58px; height: 22px; margin: 3px auto 0; border: 1px solid #3b4788; border-radius: 3px; background: #262d5c; color: #fff; line-height: 20px; overflow: hidden; }
.tog b, .tog em { flex: 1; font-weight: 500; font-style: normal; text-shadow: 1px 1px 2px #000; }
.tog b { background: #4a76f4; }
.geo { height: 616px; margin-top: -1px; }
.geo-bar { height: 52px; display: flex; align-items: center; padding: 6px 4px 0; font-size: 13px; font-weight: 500; letter-spacing: -0.5px; }
.geo-bar label { width: 37px; }
.sel { width: 103px; height: 30px; border: 1px solid #46539c; border-radius: 3px; background: #27346a; display: flex; align-items: center; padding-left: 29px; line-height: 28px; }
.sel svg { margin-left: 23px; opacity: 0.700; }
.geo-bar span { margin-left: auto; color: #d6d8e0; }
.geo-bar i { width: 34px; height: 17px; border-radius: 4px; background: #fffa80; margin-left: 5px; }
.costs { height: 36px; padding: 11px 0 0 59px; display: flex; font-size: 12.500px; font-weight: 500; line-height: 26px; letter-spacing: -0.4px; white-space: nowrap; }
.costs span { width: 68px; }
.costs b { width: 155px; font-weight: 500; color: #ffee00; }
.costs b:last-child { width: auto; }
.btns { display: flex; gap: 11px; padding: 8px 0 0 21px; height: 38px; }
.btns .btn { width: 138.500px; gap: 28px; padding-left: 20px; }
.grp { display: flex; gap: 9px; margin-left: auto; margin-right: 8px; }
.grp .btn { width: 95.500px; gap: 6px; background: #2c3a78; }
.tbl { margin: 9px 17px 9px 16px; height: 188px; overflow: hidden; font-size: 14px; font-weight: 500; text-align: center; }
.tr { display: grid; grid-template-columns: 226px 1fr; height: 33px; line-height: 32px; border-bottom: 1px solid #222b58; }
.tr.th { height: 39px; line-height: 39px; background: #27366e; border-bottom-color: #46539c; font-weight: 700; font-size: 14.500px; }

/* distribution network system */
.grid-sys h1 { font: 400 19px/44px "Noto Sans CJK SC", sans-serif; letter-spacing: 0.8px; height: 47px; padding-left: 708px; color: #e6e6ee; }
.bar {
  width: 1562px;
  height: 43px;
  margin-left: 17px;
  border: 1px solid #4254a8;
  border-radius: 4px;
  background: linear-gradient(#557adf, #4162b8 40%, #2b3a85 75%, #232a69);
  display: flex;
}
.bar a { display: flex; align-items: center; gap: 7px; font-size: 14.200px; font-weight: 500; letter-spacing: -0.3px; text-shadow: 1px 1px 2px #000; }
.bar .n1 { width: 84px; padding-left: 20px; }
.bar .on { width: 114px; padding-left: 19px; border-bottom: 2px solid #e8b73a; }
.bar .n3 { padding-left: 18px; width: 131px; }
.bar .n4 .cv { margin-left: 5px; }
.work { display: flex; gap: 9px; margin: 21px 0 0 17px; }
.frame { border: 1px solid #4652a0; border-radius: 4px; box-shadow: inset 0 0 14px #292d57; }
.side { width: 87px; height: 708px; }
.side .act { width: 53px; height: 49px; margin: 4px auto 0 16px; border-radius: 3px; background: #4c7dfd; display: flex; align-items: center; justify-content: center; }
.side .last { margin: 17px 0 0 36px; }
.outer { width: 1466px; height: 708px; padding: 8px 24px; }
.inner { width: 1415px; height: 691px; }
.tabs { height: 32px; background: #000; display: flex; font-size: 12px; line-height: 33px; letter-spacing: -0.3px; color: #888; }
.tabs span { width: 125px; text-align: center; }
.tabs .on { background: #4c7dfd; color: #fff; }
.body { display: flex; padding: 13px 0 0 12px; }
.list { width: 343px; height: 630px; border: 2px solid #3a5fc4; border-left: 0; border-right-width: 1.500px; display: flex; }
.list ul { list-style: none; width: 326px; margin: 5px 0 0 5px; }
.list li { height: 27.100px; padding-left: 8px; border-bottom: 1px solid #2b4187; font-size: 13.300px; font-weight: 500; line-height: 27px; letter-spacing: -0.15px; }
.list li:nth-child(1), .list li:nth-child(6), .list li:nth-child(22), .list li:nth-child(23) { border-color: transparent; }
.list li.on { background: #4c7dfd; }
.list .sb { width: 9px; height: 547px; margin: 15px 0 0 3px; border-radius: 4px; background: #828282; }
.right { margin-left: 8px; padding-top: 1px; }
.date { width: 182px; height: 28px; border: 1px solid #3c4a92; border-radius: 3px; background: #27346a; display: flex; align-items: center; padding-left: 8px; font-size: 12px; letter-spacing: -0.5px; line-height: 26px; }
.date span { margin-left: 41px; }
.plot { width: 1039px; height: 594px; margin-top: 8px; }
.plot h2 { height: 36px; display: flex; align-items: center; gap: 14px; padding: 11px 0 0 16px; font: 700 14.600px/26px "Noto Sans CJK SC", sans-serif; color: #3fcfe2; }
.wire path { stroke: #c4c6ce; stroke-width: 1.200px; vector-effect: non-scaling-stroke; }
.wire path.axis { stroke: #4fb0f5; stroke-width: 1.700px; }
.wire path.tick { stroke: #3d86bf; }
.lb text { fill: #4aa5e8; font-size: 10px; text-anchor: middle; letter-spacing: -0.3px; }
.lb.big text { font-size: 12.500px; }
```
